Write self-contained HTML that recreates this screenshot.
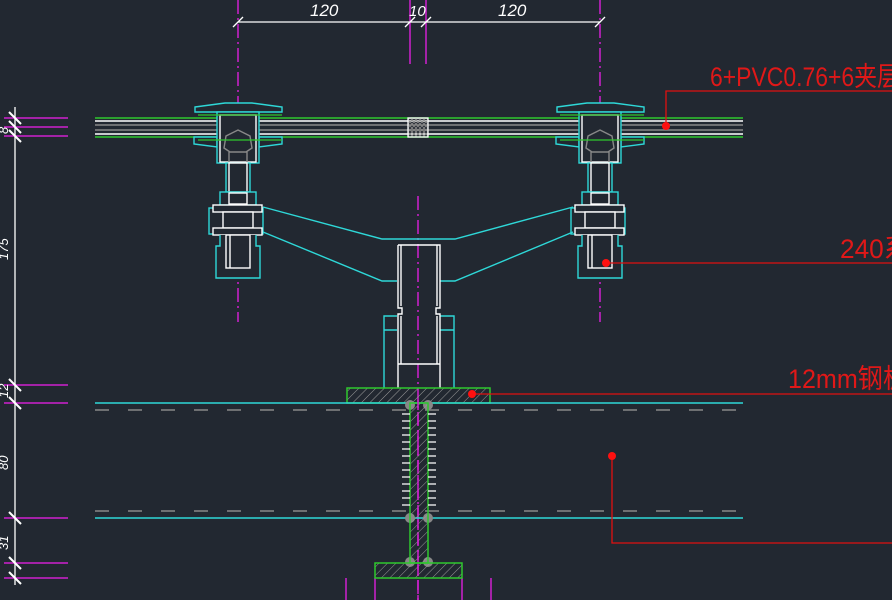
<!DOCTYPE html>
<html><head><meta charset="utf-8"><style>
html,body{margin:0;padding:0;background:#222831;}
svg{display:block}
text{font-family:"Liberation Sans","Noto Sans CJK SC",sans-serif;}
</style></head><body>
<svg width="892" height="600" viewBox="0 0 892 600" xmlns="http://www.w3.org/2000/svg">
<defs>
<pattern id="h" width="6" height="6" patternUnits="userSpaceOnUse" patternTransform="rotate(45)">
<line x1="0" y1="0" x2="0" y2="6" stroke="#9a9a9a" stroke-width="1"/></pattern>
<pattern id="x" width="4" height="4" patternUnits="userSpaceOnUse">
<path d="M0 0L4 4M4 0L0 4" stroke="#888" stroke-width="0.8"/></pattern>
</defs>
<rect width="892" height="600" fill="#222831"/>

<!-- center lines magenta -->
<g stroke="#d020d0" stroke-width="1.5" stroke-dasharray="14 4 2 4" fill="none">
<line x1="238" y1="0" x2="238" y2="322"/>
<line x1="600" y1="0" x2="600" y2="322"/>
<line x1="418" y1="196" x2="418" y2="600"/>
</g>
<g stroke="#d020d0" stroke-width="1.5">
<line x1="410" y1="0" x2="410" y2="64"/><line x1="426" y1="0" x2="426" y2="64"/>
<line x1="346" y1="578" x2="346" y2="600"/><line x1="491" y1="578" x2="491" y2="600"/>
<line x1="375" y1="578" x2="375" y2="600"/><line x1="462" y1="578" x2="462" y2="600"/>
</g>
<!-- top dims -->
<g stroke="#fff" stroke-width="1.3">
<line x1="238" y1="22" x2="600" y2="22"/>
<line x1="233" y1="27" x2="243" y2="17"/><line x1="405" y1="27" x2="415" y2="17"/>
<line x1="421" y1="27" x2="431" y2="17"/><line x1="595" y1="27" x2="605" y2="17"/>
</g>
<g fill="#fff" font-size="17" font-style="italic">
<text x="310" y="16">120</text><text x="409" y="16" font-size="15">10</text><text x="498" y="16">120</text>
</g>

<!-- left dims -->
<g stroke="#d020d0" stroke-width="1.5">
<line x1="4" y1="118" x2="68" y2="118"/><line x1="4" y1="127" x2="68" y2="127"/><line x1="4" y1="136" x2="68" y2="136"/>
<line x1="4" y1="385" x2="68" y2="385"/><line x1="4" y1="403" x2="68" y2="403"/>
<line x1="4" y1="518" x2="68" y2="518"/><line x1="4" y1="563" x2="68" y2="563"/><line x1="4" y1="578" x2="68" y2="578"/>
</g>
<g stroke="#fff" stroke-width="1.3">
<line x1="15" y1="107" x2="15" y2="585"/>
<g stroke-width="2">
<line x1="9" y1="112" x2="21" y2="124"/><line x1="9" y1="121" x2="21" y2="133"/><line x1="9" y1="130" x2="21" y2="142"/>
<line x1="9" y1="379" x2="21" y2="391"/><line x1="9" y1="397" x2="21" y2="409"/>
<line x1="9" y1="512" x2="21" y2="524"/><line x1="9" y1="557" x2="21" y2="569"/><line x1="9" y1="572" x2="21" y2="584"/>
</g></g>
<g fill="#fff" font-size="13" font-style="italic">
<text transform="translate(8,260) rotate(-90)">175</text>
<text transform="translate(8,470) rotate(-90)">80</text>
<text transform="translate(8,398) rotate(-90)">12</text>
<text transform="translate(8,550) rotate(-90)">31</text>
<text transform="translate(8,134) rotate(-90)">8</text>
</g>

<!-- glass -->
<g stroke-width="1.5" fill="none">
<line x1="95" y1="118" x2="743" y2="118" stroke="#2ec82e"/>
<line x1="95" y1="137" x2="743" y2="137" stroke="#2ec82e"/>
<line x1="95" y1="121" x2="743" y2="121" stroke="#fff"/>
<line x1="95" y1="125" x2="743" y2="125" stroke="#888"/>
<line x1="95" y1="130" x2="743" y2="130" stroke="#888"/>
<line x1="95" y1="134" x2="743" y2="134" stroke="#fff"/>
</g>
<rect x="408" y="118" width="20" height="19" fill="url(#x)" stroke="#fff" stroke-width="1.3"/>

<!-- fittings -->
<g id="fit" fill="#222831" stroke-width="1.4">
<path d="M195 107 L225 103 L252 103 L282 107 L282 112 L195 112Z" stroke="#2ed8d8"/>
<path d="M194 137 L217 137 L217 147 L194 144Z M259 137 L282 137 L282 144 L259 147Z" stroke="#2ed8d8"/>
<rect x="217" y="112" width="42" height="51" stroke="#2ed8d8"/>
<rect x="220" y="115" width="36" height="47" stroke="#fff"/>
<path d="M238 130 L250 136 L252 148 L246 152 L230 152 L224 148 L226 136Z M229 152 L229 162 M247 152 L247 162" stroke="#888"/>
<rect x="226" y="163" width="24" height="29" stroke="#2ed8d8"/>
<rect x="229" y="163" width="18" height="29" stroke="#fff"/>
<rect x="220" y="192" width="36" height="13" stroke="#2ed8d8"/>
<rect x="229" y="193" width="18" height="11" stroke="#fff"/>
<rect x="209" y="208" width="54" height="26" stroke="#2ed8d8"/>
<rect x="213" y="205" width="49" height="7" stroke="#fff"/>
<rect x="223" y="212" width="30" height="16" stroke="#fff"/>
<rect x="213" y="228" width="49" height="7" stroke="#fff"/>
<path d="M220 235 L220 246 L216 246 L216 278 L260 278 L260 246 L256 246 L256 235" stroke="#2ed8d8"/>
<rect x="226" y="235" width="24" height="33" stroke="#fff"/>
<line x1="230" y1="235" x2="230" y2="268" stroke="#fff"/>
</g>
<use href="#fit" transform="translate(362,0)"/>
<g stroke="#2ec82e" stroke-width="1.3" fill="none">
<line x1="198" y1="115" x2="282" y2="115"/><line x1="198" y1="140" x2="282" y2="140"/>
<line x1="560" y1="115" x2="644" y2="115"/><line x1="560" y1="140" x2="644" y2="140"/>
</g>

<!-- arms -->
<g stroke="#2ed8d8" stroke-width="1.4" fill="none">
<path d="M263 207 L382 239 L455 239 L573 207"/>
<path d="M263 232 L382 281 L397 281"/>
<path d="M573 232 L455 281 L440 281"/>
<path d="M397 316 L384 316 L384 388 M440 316 L454 316 L454 388 M384 330 L397 330 M440 330 L454 330"/>
</g>
<g stroke="#fff" stroke-width="1.4" fill="none">
<path d="M398 245 L440 245 L440 308 L436 308 L436 314 L440 314 L440 388 M398 245 L398 308 L402 308 L402 314 L398 314 L398 388"/>
<path d="M401 245 L401 306 M437 245 L437 306 M401 316 L401 364 M437 316 L437 364 M398 364 L440 364"/>
</g>

<!-- steel plate & bolt -->
<rect x="347" y="388" width="143" height="15" fill="url(#h)" stroke="#2ec82e" stroke-width="1.5"/>
<g stroke="#2ed8d8" stroke-width="1.4">
<line x1="95" y1="403" x2="743" y2="403"/><line x1="95" y1="518" x2="743" y2="518"/>
</g>
<g stroke="#888" stroke-width="1.4" stroke-dasharray="14 19">
<line x1="95" y1="410" x2="743" y2="410"/><line x1="95" y1="511" x2="743" y2="511"/>
</g>
<g fill="#888">
<circle cx="410" cy="405" r="5"/><circle cx="428" cy="405" r="5"/>
<circle cx="410" cy="518" r="5"/><circle cx="428" cy="518" r="5"/>
<circle cx="410" cy="562" r="5"/><circle cx="428" cy="562" r="5"/>
</g>
<rect x="410" y="403" width="18" height="160" fill="url(#h)" stroke="#2ec82e" stroke-width="1.5"/>
<g stroke="#fff" stroke-width="1.2">
<path d="M402 414H410M428 414H436M402 421H410M428 421H436M402 428H410M428 428H436M402 435H410M428 435H436M402 442H410M428 442H436M402 449H410M428 449H436M402 456H410M428 456H436M402 463H410M428 463H436M402 470H410M428 470H436M402 477H410M428 477H436M402 484H410M428 484H436M402 491H410M428 491H436M402 498H410M428 498H436M402 505H410M428 505H436"/>
</g>
<rect x="375" y="563" width="87" height="15" fill="url(#h)" stroke="#2ec82e" stroke-width="1.5"/>
<line x1="418" y1="400" x2="418" y2="600" stroke="#d020d0" stroke-width="1.5" stroke-dasharray="10 5"/>

<!-- red leaders -->
<g stroke="#e01010" stroke-width="1.3" fill="none">
<path d="M666 126 L666 91 L892 91"/>
<path d="M606 263 L892 263"/>
<path d="M472 394 L892 394"/>
<path d="M612 456 L612 543 L892 543"/>
</g>
<g fill="#ff1010">
<circle cx="666" cy="126" r="4"/><circle cx="606" cy="263" r="4"/>
<circle cx="472" cy="394" r="4"/><circle cx="612" cy="456" r="4"/>
</g>
<g fill="#e01818" font-size="27">
<text x="710" y="86" textLength="190" lengthAdjust="spacingAndGlyphs">6+PVC0.76+6夹层</text>
<text x="840" y="258" textLength="70" lengthAdjust="spacingAndGlyphs">240系</text>
<text x="788" y="388" textLength="120" lengthAdjust="spacingAndGlyphs">12mm钢板</text>
</g>
</svg>
</body></html>
